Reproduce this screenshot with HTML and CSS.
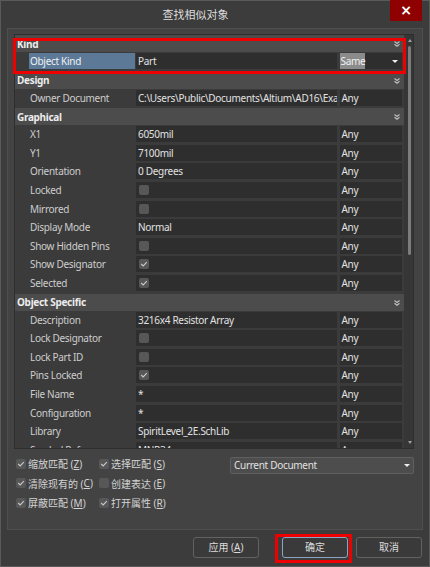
FILE: index.html
```html
<!DOCTYPE html>
<html lang="zh">
<head>
<meta charset="utf-8">
<title>查找相似对象</title>
<link rel="stylesheet" href="styles.css">
</head>
<body>
<div class="window">
  <div class="titlebar">
    <div class="title">查找相似对象</div>
    <div class="close">×</div>
  </div>
  <div class="panel">
    <div class="grid">
      <div class="rows">
        <div class="ghead"><span>Kind</span><svg class="chev" width="6" height="6" viewBox="0 0 6 6"><polyline points="0.5,0.5 3,2.5 5.5,0.5"/><polyline points="0.5,3.2 3,5.2 5.5,3.2"/></svg></div>
        <div class="row">
          <div class="lab lab-sel">Object Kind</div>
          <div class="val">Part</div>
          <div class="any any-drop"><span class="same">Same</span><span class="drop-arrow"></span></div>
        </div>
        <div class="ghead"><span>Design</span><svg class="chev" width="6" height="6" viewBox="0 0 6 6"><polyline points="0.5,0.5 3,2.5 5.5,0.5"/><polyline points="0.5,3.2 3,5.2 5.5,3.2"/></svg></div>
        <div class="row"><div class="lab">Owner Document</div><div class="val">C:\Users\Public\Documents\Altium\AD16\Exa</div><div class="any">Any</div></div>
        <div class="ghead"><span>Graphical</span><svg class="chev" width="6" height="6" viewBox="0 0 6 6"><polyline points="0.5,0.5 3,2.5 5.5,0.5"/><polyline points="0.5,3.2 3,5.2 5.5,3.2"/></svg></div>
        <div class="row"><div class="lab">X1</div><div class="val">6050mil</div><div class="any">Any</div></div>
        <div class="row"><div class="lab">Y1</div><div class="val">7100mil</div><div class="any">Any</div></div>
        <div class="row"><div class="lab">Orientation</div><div class="val">0 Degrees</div><div class="any">Any</div></div>
        <div class="row"><div class="lab">Locked</div><div class="val"><span class="cb"></span></div><div class="any">Any</div></div>
        <div class="row"><div class="lab">Mirrored</div><div class="val"><span class="cb"></span></div><div class="any">Any</div></div>
        <div class="row"><div class="lab">Display Mode</div><div class="val">Normal</div><div class="any">Any</div></div>
        <div class="row"><div class="lab">Show Hidden Pins</div><div class="val"><span class="cb"></span></div><div class="any">Any</div></div>
        <div class="row"><div class="lab">Show Designator</div><div class="val"><span class="cb"><svg width="10" height="10" viewBox="0 0 10 10"><polyline points="2.2,5 4.2,7 7.8,3.2"/></svg></span></div><div class="any">Any</div></div>
        <div class="row"><div class="lab">Selected</div><div class="val"><span class="cb"><svg width="10" height="10" viewBox="0 0 10 10"><polyline points="2.2,5 4.2,7 7.8,3.2"/></svg></span></div><div class="any">Any</div></div>
        <div class="ghead"><span>Object Specific</span><svg class="chev" width="6" height="6" viewBox="0 0 6 6"><polyline points="0.5,0.5 3,2.5 5.5,0.5"/><polyline points="0.5,3.2 3,5.2 5.5,3.2"/></svg></div>
        <div class="row"><div class="lab">Description</div><div class="val">3216x4 Resistor Array</div><div class="any">Any</div></div>
        <div class="row"><div class="lab">Lock Designator</div><div class="val"><span class="cb"></span></div><div class="any">Any</div></div>
        <div class="row"><div class="lab">Lock Part ID</div><div class="val"><span class="cb"></span></div><div class="any">Any</div></div>
        <div class="row"><div class="lab">Pins Locked</div><div class="val"><span class="cb"><svg width="10" height="10" viewBox="0 0 10 10"><polyline points="2.2,5 4.2,7 7.8,3.2"/></svg></span></div><div class="any">Any</div></div>
        <div class="row"><div class="lab">File Name</div><div class="val">*</div><div class="any">Any</div></div>
        <div class="row"><div class="lab">Configuration</div><div class="val">*</div><div class="any">Any</div></div>
        <div class="row"><div class="lab">Library</div><div class="val">SpiritLevel_2E.SchLib</div><div class="any">Any</div></div>
        <div class="row"><div class="lab">Symbol Reference</div><div class="val">MNR34</div><div class="any">Any</div></div>
      </div>
      <div class="scrollbar">
        <span class="sb-up"></span>
        <span class="sb-thumb"></span>
        <span class="sb-fill"></span>
        <span class="sb-down"></span>
      </div>
    </div>
    <div class="options">
      <div class="checks">
        <label class="opt"><span class="cb"><svg width="10" height="10" viewBox="0 0 10 10"><polyline points="2.2,5 4.2,7 7.8,3.2"/></svg></span>缩放匹配 (<u>Z</u>)</label>
        <label class="opt"><span class="cb"><svg width="10" height="10" viewBox="0 0 10 10"><polyline points="2.2,5 4.2,7 7.8,3.2"/></svg></span>选择匹配 (<u>S</u>)</label>
        <label class="opt"><span class="cb"><svg width="10" height="10" viewBox="0 0 10 10"><polyline points="2.2,5 4.2,7 7.8,3.2"/></svg></span>清除现有的 (<u>C</u>)</label>
        <label class="opt"><span class="cb"></span>创建表达 (<u>E</u>)</label>
        <label class="opt"><span class="cb"><svg width="10" height="10" viewBox="0 0 10 10"><polyline points="2.2,5 4.2,7 7.8,3.2"/></svg></span>屏蔽匹配 (<u>M</u>)</label>
        <label class="opt"><span class="cb"><svg width="10" height="10" viewBox="0 0 10 10"><polyline points="2.2,5 4.2,7 7.8,3.2"/></svg></span>打开属性 (<u>R</u>)</label>
      </div>
      <div class="combo"><span>Current Document</span><span class="drop-arrow"></span></div>
    </div>
  </div>
  <div class="buttons">
    <div class="btn btn-apply">应用 (<u>A</u>)</div>
    <div class="btn btn-ok">确定</div>
    <div class="btn btn-cancel">取消</div>
  </div>
</div>
<div class="mark mark-kind"></div>
<div class="mark mark-ok"></div>
</body>
</html>
```
FILE: styles.css
```css
* { box-sizing: border-box; }
html, body { margin: 0; padding: 0; }
body {
  width: 430px;
  height: 567px;
  overflow: hidden;
  background: #3b3b3b;
  font-family: "Noto Sans", "Noto Sans CJK SC", sans-serif;
  font-size: 10px;
  letter-spacing: -0.3px;
  color: #d2d2d2;
}
.window {
  width: 430px;
  height: 567px;
  border: 1px solid #5a5a5a;
  background: #3c3c3c;
  display: flex;
  flex-direction: column;
}
.titlebar {
  height: 27px;
  flex: none;
  display: flex;
  padding-right: 7px;
}
.title {
  flex: 1;
  text-align: center;
  line-height: 27px;
  font-family: "Noto Sans CJK SC", sans-serif;
  font-size: 11px;
  letter-spacing: 0;
  color: #dedede;
}
.close {
  width: 32px;
  height: 21px;
  margin-top: -1px;
  background: #8f0000;
  color: #ffffff;
  font-family: "DejaVu Sans", sans-serif;
  font-weight: bold;
  font-size: 14px;
  line-height: 20px;
  text-align: center;
}
.panel {
  flex: none;
  height: 502px;
  margin: 0 6px;
  background: #434343;
  border: 1px solid #4f4f4f;
  padding: 5px 9px 0 6px;
}
.grid {
  width: 400px;
  height: 415px;
  border: 1px solid #2e2e2e;
  background: #3b3b3b;
  display: flex;
}
.rows {
  width: 389px;
  overflow: hidden;
  flex: none;
}
.ghead {
  height: 17px;
  margin-bottom: 1px;
  background: #4c4c4c;
  color: #ececec;
  font-weight: bold;
  display: flex;
  align-items: center;
  justify-content: space-between;
  padding: 0 4px 0 2px;
}
.chev {
  align-self: flex-start;
  margin-top: 6px;
}
.chev polyline {
  fill: none;
  stroke: #c0c0c0;
  stroke-width: 1.1;
}
.row {
  height: 16px;
  margin-bottom: 2.6px;
  display: flex;
  line-height: 16px;
  white-space: nowrap;
}
.lab {
  margin-left: 14px;
  width: 106px;
  padding-left: 1px;
  color: #cdcdcd;
  overflow: hidden;
}
.lab-sel {
  background: #5c7a98;
  color: #f0f0f0;
}
.val {
  margin-left: 1px;
  width: 201px;
  background: #2e2e2e;
  padding-left: 2px;
  overflow: hidden;
  color: #e2e2e2;
}
.any {
  margin-left: 2.5px;
  width: 62.5px;
  background: #2e2e2e;
  padding-left: 2px;
  color: #e2e2e2;
  overflow: hidden;
}
.any-drop {
  padding-left: 0;
  display: flex;
  align-items: center;
}
.same {
  background: #8b8b8b;
  height: 16px;
  width: 25.5px;
  padding-left: 1px;
  color: #f2f2f2;
  line-height: 16px;
}
.drop-arrow {
  width: 0;
  height: 0;
  border-left: 3.5px solid transparent;
  border-right: 3.5px solid transparent;
  border-top: 3.5px solid #f0f0f0;
  margin-left: auto;
  margin-right: 4px;
}
.cb {
  width: 10px;
  height: 10px;
  border-radius: 2px;
  background: #575757;
  display: inline-block;
  vertical-align: -1px;
  margin-left: 1px;
  flex: none;
}
.cb svg { display: block; }
.cb polyline {
  fill: none;
  stroke: #c9c9c9;
  stroke-width: 1.1;
}
.scrollbar {
  flex: 1;
  background: #363636;
  display: flex;
  flex-direction: column;
  align-items: center;
  padding: 4px 0 4px 2px;
}
.sb-up, .sb-down {
  width: 0;
  height: 0;
  border-left: 2.5px solid transparent;
  border-right: 2.5px solid transparent;
}
.sb-up { border-bottom: 3px solid #a0a0a0; }
.sb-down { border-top: 3px solid #a0a0a0; }
.sb-thumb {
  width: 3.5px;
  height: 209px;
  margin-top: 4px;
  background: #7c7c7c;
  border-radius: 2px;
}
.sb-fill { flex: 1; }
.options {
  display: flex;
  align-items: flex-start;
  margin-top: 4.7px;
}
.checks {
  display: grid;
  grid-template-columns: 83px auto;
  grid-auto-rows: 19.7px;
  padding-left: 2px;
}
.opt {
  display: flex;
  align-items: center;
  white-space: nowrap;
  letter-spacing: 0;
  color: #d4d4d4;
}
.opt .cb {
  margin: 0 2px 0 0;
}
.combo {
  margin-left: auto;
  margin-right: -1px;
  margin-top: 3px;
  width: 184px;
  height: 17px;
  background: #4d4d4d;
  border: 1px solid #5f5f5f;
  border-radius: 2px;
  display: flex;
  align-items: center;
  padding-left: 3px;
  color: #e0e0e0;
}
.combo .drop-arrow {
  margin-right: 3px;
}
.buttons {
  flex: 1;
  display: flex;
  justify-content: flex-end;
  align-items: flex-start;
  padding: 7px 7px 0 0;
}
.btn {
  width: 66px;
  height: 21px;
  border: 1px solid #626262;
  border-radius: 3px;
  background: #3a3a3a;
  text-align: center;
  line-height: 19px;
  letter-spacing: 0;
  color: #dcdcdc;
}
.btn-ok {
  margin-left: 23px;
  border-color: #8aa6c2;
}
.btn-cancel {
  margin-left: 8px;
}
.mark {
  position: absolute;
  border: 3px solid #ee0000;
}
.mark-kind {
  left: 13px;
  top: 38px;
  width: 393px;
  height: 36px;
}
.mark-ok {
  left: 275px;
  top: 534px;
  width: 77px;
  height: 29px;
}
```
